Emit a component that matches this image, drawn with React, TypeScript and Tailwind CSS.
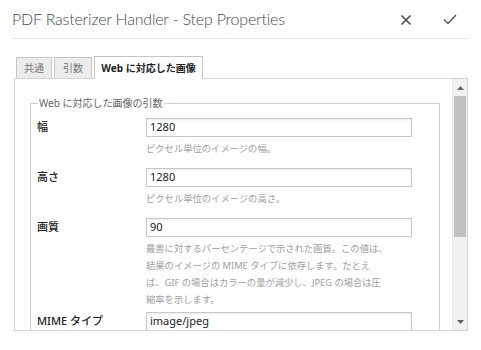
import React from 'react';

const jp = '"Noto Sans", "Noto Sans CJK JP", sans-serif';

interface Field {
  label: string;
  value: string;
  help?: string[];
}

const fields: Field[] = [
  { label: '幅', value: '1280', help: ['ピクセル単位のイメージの幅。'] },
  { label: '高さ', value: '1280', help: ['ピクセル単位のイメージの高さ。'] },
  {
    label: '画質',
    value: '90',
    help: [
      '最善に対するパーセンテージで示された画質。この値は、',
      '結果のイメージの MIME タイプに依存します。たとえ',
      'ば、GIF の場合はカラーの量が減少し、JPEG の場合は圧',
      '縮率を示します。',
    ],
  },
  { label: 'MIME タイプ', value: 'image/jpeg' },
];

export default function App() {
  return (
    <div className="w-[481px] h-[350px] bg-white overflow-hidden" style={{ fontFamily: jp }}>
      {/* ヘッダー */}
      <div className="mx-3 h-[39px] flex items-center justify-between border-b border-[#e3e3e3]">
        <h1 className="text-[16px] font-light text-[#4b4b4b] tracking-[-0.2px]" style={{ fontFamily: 'Lato, sans-serif' }}>
          PDF Rasterizer Handler - Step Properties
        </h1>
        <div className="flex items-center gap-[31px] pr-[12px] pt-[1px]">
          <svg width="12" height="12" viewBox="0 0 12 12">
            <path d="M1.5 1.5 L10.5 10.5 M10.5 1.5 L1.5 10.5" stroke="#505050" strokeWidth="1.7" />
          </svg>
          <svg width="14" height="11" viewBox="0 0 14 11">
            <path d="M1 5.5 L5 9.5 L13 1" stroke="#505050" strokeWidth="1.3" fill="none" />
          </svg>
        </div>
      </div>

      {/* タブ */}
      <div className="flex items-end pl-[16px] mt-[17px] gap-[2px] h-[22px]">
        <div className="h-[21px] w-[36px] border border-b-0 border-[#c6c6c6] bg-[#ececec] text-[10px] text-[#777] flex items-center justify-center">
          共通
        </div>
        <div className="h-[21px] w-[38px] border border-b-0 border-[#c6c6c6] bg-[#ececec] text-[10px] text-[#777] flex items-center justify-center">
          引数
        </div>
        <div className="relative z-10 h-[23px] w-[109px] border border-b-0 border-[#c6c6c6] bg-white text-[10px] font-bold text-[#222] flex items-center justify-center -mb-px">
          Web に対応した画像
        </div>
      </div>

      {/* パネル */}
      <div className="mx-[14px] w-[454px] h-[253px] border border-[#d4d4d4] flex">
        <div className="flex-1 overflow-hidden pl-[15px] pr-[12px] pt-[17px]">
          <fieldset className="border border-[#d0d0d0] pl-[6px] pr-[13px] pb-4">
            <legend className="text-[10px] text-[#666] px-[1px] ml-[1px]">Web に対応した画像の引数</legend>
            <div className="flex flex-col">
              {fields.map((f, i) => (
                <div key={f.label} className={i === 0 ? 'mt-[7px]' : i === 3 ? 'mt-[4px]' : 'mt-[11px]'}>
                  <div className="flex items-center">
                    <div className="w-[109px] text-[11px] font-medium text-[#222]">{f.label}</div>
                    <div className="w-[266px] h-[19px] border border-[#c8c8c8] shadow-[inset_0_1px_2px_rgba(0,0,0,0.08)] flex items-center pl-[3px] text-[11px] text-[#222]">
                      {f.value}
                    </div>
                  </div>
                  {f.help && (
                    <div className="ml-[109px] mt-[3px] text-[9.3px] leading-[17px] text-[#a0a0a0] whitespace-nowrap">
                      {f.help.map((h) => (
                        <div key={h}>{h}</div>
                      ))}
                    </div>
                  )}
                </div>
              ))}
            </div>
          </fieldset>
        </div>

        {/* スクロールバー */}
        <div className="w-[15px] h-full bg-[#f1f1f1] border-l border-[#e6e6e6] flex flex-col">
          <div className="h-[17px] flex items-center justify-center">
            <svg width="7" height="4" viewBox="0 0 7 4">
              <path d="M3.5 0 L7 4 L0 4 Z" fill="#606060" />
            </svg>
          </div>
          <div className="mx-[1px] h-[141px] bg-[#c1c1c1]" />
          <div className="flex-1" />
          <div className="h-[17px] flex items-center justify-center">
            <svg width="7" height="4" viewBox="0 0 7 4">
              <path d="M0 0 L7 0 L3.5 4 Z" fill="#606060" />
            </svg>
          </div>
        </div>
      </div>
    </div>
  );
}
